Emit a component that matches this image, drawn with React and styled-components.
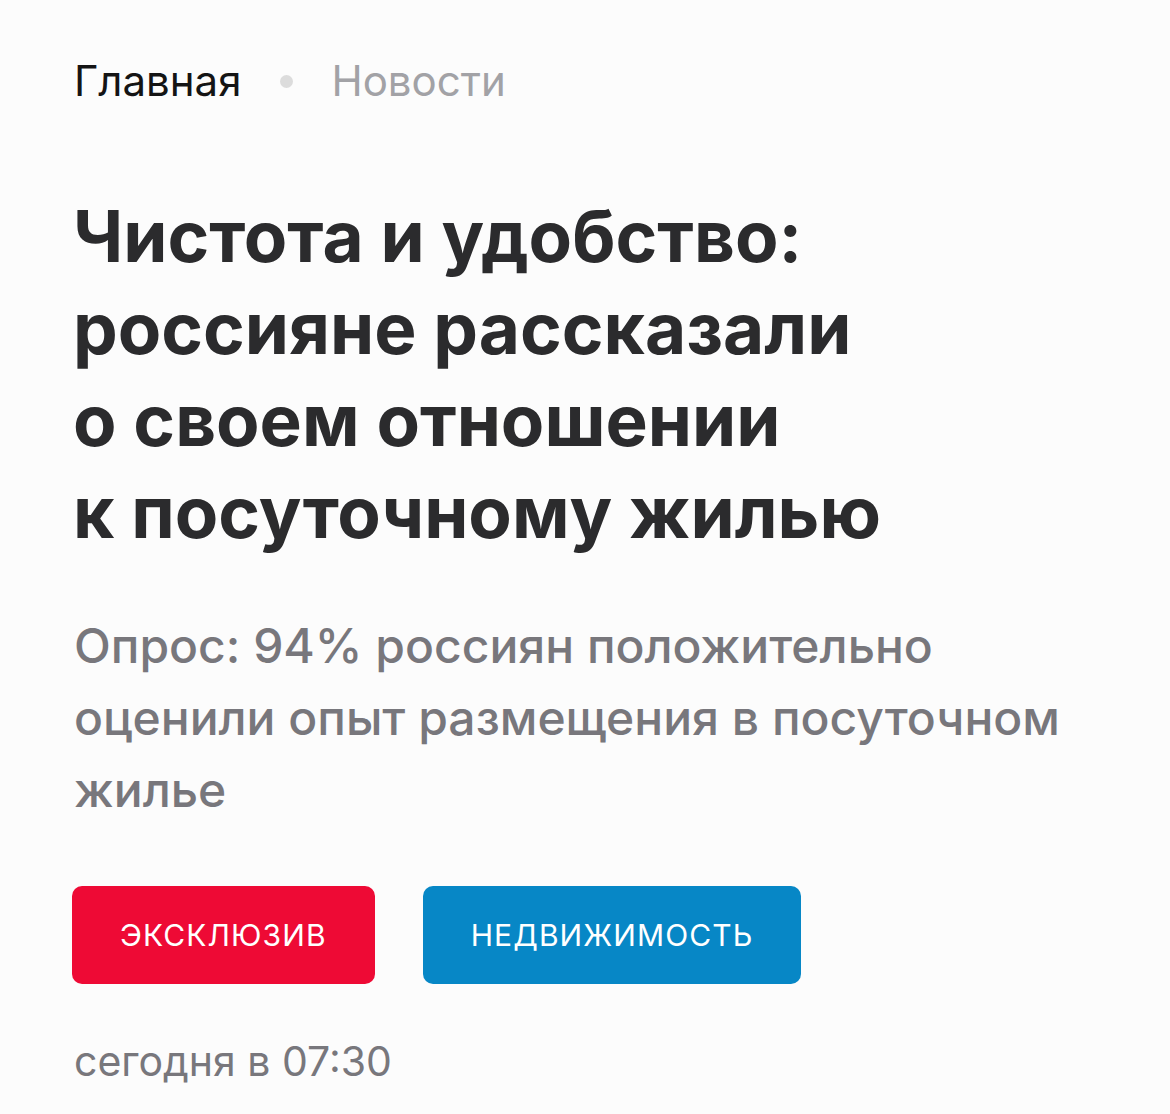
import React from 'react';
import styled, { createGlobalStyle } from 'styled-components';

const GlobalStyle = createGlobalStyle`
  html, body {
    margin: 0;
    padding: 0;
    background: #fcfcfc;
  }
  body {
    font-family: Inter, "Noto Sans", "Liberation Sans", sans-serif;
    -webkit-font-smoothing: antialiased;
  }
`;

const Page = styled.article`
  width: 1170px;
  min-height: 1114px;
  box-sizing: border-box;
  padding: 52px 72px 0 72px;
  background: #fcfcfc;
`;

/** breadcrumbs **/
const Crumbs = styled.nav`
  display: flex;
  align-items: center;
  gap: 36px;
  height: 58px;
  font-size: 42px;
  line-height: 58px;
`;

const Crumb = styled.a`
  color: ${p => (p.$muted ? '#a2a2a6' : '#141414')};
  text-decoration: none;
  padding-left: 2px;
`;

const Dot = styled.span`
  width: 13px;
  height: 13px;
  margin-left: 3px;
  border-radius: 50%;
  background: #dcdcdc;
`;

const Title = styled.h1`
  margin: 80px 0 0 0;
  padding-left: 1px;
  font-size: 71px;
  line-height: 92px;
  font-weight: 700;
  color: #2b2b2d;
`;

const Lead = styled.p`
  margin: 52px 0 0 0;
  padding-left: 2px;
  max-width: 1020px;
  font-size: 48px;
  line-height: 72px;
  font-weight: 500;
  color: #78777c;
`;

const Tags = styled.div`
  display: flex;
  gap: 48px;
  margin-top: 60px;
`;

const Tag = styled.a`
  display: flex;
  align-items: center;
  justify-content: center;
  height: 98px;
  padding: 0 48px;
  border-radius: 10px;
  background: ${p => p.$color};
  color: #ffffff;
  font-size: 30px;
  letter-spacing: 1.1px;
  text-transform: uppercase;
  text-decoration: none;
`;

const Time = styled.div`
  margin-top: 50px;
  padding-left: 2px;
  font-size: 41px;
  line-height: 54px;
  color: #78777c;
`;

export default function App() {
  return (
    <>
      <GlobalStyle />
      <Page>
        <Crumbs>
          <Crumb href="#">Главная</Crumb>
          <Dot />
          <Crumb href="#" $muted>Новости</Crumb>
        </Crumbs>

        <Title>
          Чистота и удобство:
          <br />
          россияне рассказали
          <br />
          о своем отношении
          <br />
          к посуточному жилью
        </Title>

        <Lead>
          Опрос: 94% россиян положительно оценили опыт размещения в посуточном жилье
        </Lead>

        <Tags>
          <Tag href="#" $color="#ee0a35">эксклюзив</Tag>
          <Tag href="#" $color="#0787c6">недвижимость</Tag>
        </Tags>

        <Time>сегодня в 07:30</Time>
      </Page>
    </>
  );
}
